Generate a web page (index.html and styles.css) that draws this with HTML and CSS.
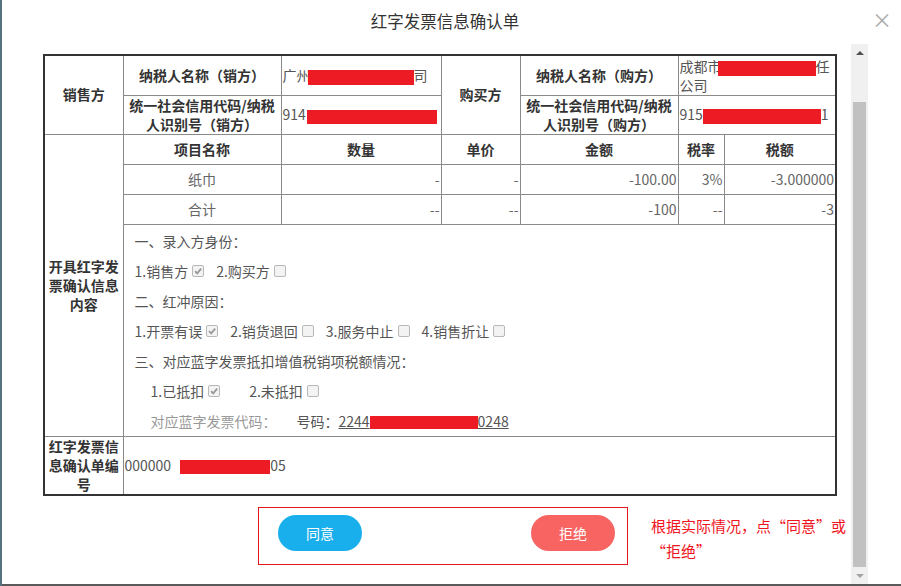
FILE: index.html
```html
<!DOCTYPE html>
<html lang="zh-CN">
<head>
<meta charset="utf-8">
<title>红字发票信息确认单</title>
<link rel="stylesheet" href="styles.css">
</head>
<body>
<div class="screen">
  <div class="modal">
    <div class="modal-head">
      <h1 class="title">红字发票信息确认单</h1>
      <span class="close">×</span>
    </div>
    <div class="modal-body">
      <div class="content">
        <table class="info">
          <colgroup>
            <col class="w79"><col class="w158"><col class="w160"><col class="w79"><col class="w158"><col class="w46"><col class="w112">
          </colgroup>
          <tr class="r1">
            <th rowspan="2" class="side">销售方</th>
            <th class="lbl">纳税人名称（销方）</th>
            <td class="val nw">广州<span class="redact rd-sname"></span>司</td>
            <th rowspan="2" class="side">购买方</th>
            <th class="lbl">纳税人名称（购方）</th>
            <td colspan="2" class="val nw">成都市<span class="redact rd-bname"></span>任<br>公司</td>
          </tr>
          <tr class="r2">
            <th class="lbl">统一社会信用代码/纳税人识别号（销方）</th>
            <td class="val nw">914<span class="redact rd-sid"></span></td>
            <th class="lbl">统一社会信用代码/纳税人识别号（购方）</th>
            <td colspan="2" class="val nw">915<span class="redact rd-bid"></span>1</td>
          </tr>
          <tr class="rh">
            <th rowspan="4" class="side">开具红字发票确认信息内容</th>
            <th class="ih">项目名称</th>
            <th class="ih">数量</th>
            <th class="ih">单价</th>
            <th class="ih">金额</th>
            <th class="ih">税率</th>
            <th class="ih">税额</th>
          </tr>
          <tr class="ri">
            <td class="name">纸巾</td>
            <td class="num">-</td>
            <td class="num">-</td>
            <td class="num">-100.00</td>
            <td class="num">3%</td>
            <td class="num">-3.000000</td>
          </tr>
          <tr class="ri">
            <td class="name">合计</td>
            <td class="num">--</td>
            <td class="num">--</td>
            <td class="num">-100</td>
            <td class="num">--</td>
            <td class="num">-3</td>
          </tr>
          <tr class="rf">
            <td colspan="6" class="form">
              <div class="line">一、录入方身份：</div>
              <div class="line">
                <span class="opt">1.销售方<span class="cb on"><svg viewBox="0 0 10 10"><path d="M2 5.2 L4.2 7.4 L8.2 2.6"/></svg></span></span>
                <span class="opt">2.购买方<span class="cb"></span></span>
              </div>
              <div class="line">二、红冲原因：</div>
              <div class="line">
                <span class="opt">1.开票有误<span class="cb on"><svg viewBox="0 0 10 10"><path d="M2 5.2 L4.2 7.4 L8.2 2.6"/></svg></span></span>
                <span class="opt">2.销货退回<span class="cb"></span></span>
                <span class="opt">3.服务中止<span class="cb"></span></span>
                <span class="opt">4.销售折让<span class="cb"></span></span>
              </div>
              <div class="line">三、对应蓝字发票抵扣增值税销项税额情况：</div>
              <div class="line indent">
                <span class="opt wide">1.已抵扣<span class="cb on"><svg viewBox="0 0 10 10"><path d="M2 5.2 L4.2 7.4 L8.2 2.6"/></svg></span></span>
                <span class="opt">2.未抵扣<span class="cb"></span></span>
              </div>
              <div class="line indent">
                <span class="code-label">对应蓝字发票代码：</span>
                <span class="code-no-label">号码：</span><span class="code-no">2244<span class="redact rd-code"></span>0248</span>
              </div>
            </td>
          </tr>
          <tr class="rl">
            <th class="side">红字发票信息确认单编号</th>
            <td colspan="6" class="val nw">000000<span class="redact rd-serial"></span>05</td>
          </tr>
        </table>
        <div class="actions-row">
          <div class="actions">
            <button class="btn agree">同意</button>
            <button class="btn reject">拒绝</button>
          </div>
          <p class="note">根据实际情况，点“同意”或<br>“拒绝”</p>
        </div>
      </div>
      <div class="scrollbar">
        <span class="arrow up"></span>
        <span class="thumb"></span>
        <span class="arrow down"></span>
      </div>
    </div>
  </div>
</div>
</body>
</html>
```
FILE: styles.css
```css
* { box-sizing: border-box; }
html, body { margin: 0; padding: 0; }
body {
  font-family: "Noto Sans CJK SC", "Microsoft YaHei", "Liberation Sans", sans-serif;
  background: #5c5c5c;
}
.screen {
  width: 901px;
  height: 586px;
  background: #5a5a5a;
  border-left: 2px solid #56707f;
  overflow: hidden;
}
.modal {
  position: relative;
  width: 899px;
  height: 584px;
  background: #fff;
  display: flex;
  flex-direction: column;
}
.modal-head {
  height: 44px;
  flex: none;
  display: flex;
  align-items: center;
  justify-content: center;
  padding: 0 13px 2px 0;
}
.title {
  margin: 0;
  font-size: 16.5px;
  font-weight: normal;
  color: #333;
  line-height: 20px;
}
.close {
  position: absolute;
  right: 9px;
  top: 8px;
  font-size: 20px;
  line-height: 24px;
  color: #aaa;
}
.modal-body {
  flex: 1;
  display: flex;
  min-height: 0;
}
.content {
  width: 849px;
  flex: none;
  padding: 10px 0 0 41px;
}
.scrollbar {
  width: 17px;
  flex: none;
  background: #f0f0f0;
  display: flex;
  flex-direction: column;
  align-items: center;
}
.arrow {
  width: 17px;
  height: 17px;
  display: flex;
  align-items: center;
  justify-content: center;
}
.arrow::before {
  content: "";
  width: 0;
  height: 0;
  border-left: 4px solid transparent;
  border-right: 4px solid transparent;
}
.arrow.up::before { border-bottom: 4px solid #505050; }
.arrow.down::before { border-top: 4px solid #a3a3a3; }
.thumb {
  width: 13px;
  height: 465px;
  margin-top: 41px;
  background: #c1c1c1;
}

/* table */
.info {
  border-collapse: collapse;
  table-layout: fixed;
  width: 793px;
  border: 2px solid #333;
  font-size: 14px;
}
.w79 { width: 79px; }
.w158 { width: 158px; }
.w160 { width: 160px; }
.w46 { width: 46px; }
.w112 { width: 112px; }
.info th, .info td {
  border: 1px solid #8a8a8a;
  padding: 0 2px;
  vertical-align: middle;
}
.r1 { height: 40px; }
.r2 { height: 39px; }
.rh, .ri { height: 30px; }
.rf { height: 210px; }
.rl { height: 58px; }
.side {
  font-weight: bold;
  color: #333;
  line-height: 19px;
  text-align: center;
}
.lbl {
  font-weight: bold;
  color: #333;
  line-height: 19px;
  text-align: center;
}
.val {
  color: #555;
  text-align: left;
  line-height: 18px;
  padding-left: 1px !important;
}
.nw {
  white-space: nowrap;
  overflow: hidden;
}
.ih {
  font-weight: bold;
  color: #333;
  text-align: center;
}
.name {
  color: #666;
  text-align: center;
}
.num {
  color: #666;
  text-align: right;
  padding-right: 1px !important;
}
.redact {
  display: inline-block;
  background: #ed1c24;
  vertical-align: middle;
}
.rd-sname { width: 106px; height: 15px; margin-left: -3px; }
.rd-sid { width: 130px; height: 14px; margin-left: 1px; }
.rd-bname { width: 98px; height: 15px; margin-left: -4px; }
.rd-bid { width: 118px; height: 15px; }
.rd-code { width: 108px; height: 13px; }
.rd-serial { width: 90px; height: 14px; margin-left: 9px; }

/* form section */
.info .form {
  vertical-align: top;
  padding: 1px 0 0 11px;
  color: #555;
  text-align: left;
}
.line {
  height: 30px;
  display: flex;
  align-items: center;
  white-space: nowrap;
}
.line.indent { padding-left: 16px; }
.opt {
  display: inline-flex;
  align-items: center;
  margin-right: 12px;
}
.opt.wide { margin-right: 29px; }
.cb {
  width: 12px;
  height: 12px;
  margin-left: 4px;
  border: 1px solid #b8b8b8;
  border-radius: 2px;
  background: #f3f3f3;
  display: inline-flex;
  align-items: center;
  justify-content: center;
}
.cb svg {
  width: 10px;
  height: 10px;
}
.cb svg path {
  fill: none;
  stroke: #999;
  stroke-width: 1.8;
}
.code-label {
  color: #999;
  margin-right: 20px;
}
.code-no-label { color: #555; }
.code-no {
  color: #555;
  text-decoration: underline;
}

/* actions */
.actions-row {
  display: flex;
  align-items: flex-start;
  margin-top: 11px;
}
.actions {
  margin-left: 215px;
  width: 370px;
  height: 58px;
  border: 1px solid #e8141c;
  display: flex;
  justify-content: space-between;
  padding: 7px 12px 0 19px;
}
.btn {
  width: 84px;
  height: 36px;
  border: 0;
  border-radius: 18px;
  color: #fff;
  font-family: inherit;
  font-size: 14px;
  padding: 0;
}
.agree { background: #19aeec; }
.reject { background: #f76462; }
.note {
  margin: 6px 0 0 23px;
  font-size: 15px;
  line-height: 25px;
  color: #f0141e;
  white-space: nowrap;
}
```
